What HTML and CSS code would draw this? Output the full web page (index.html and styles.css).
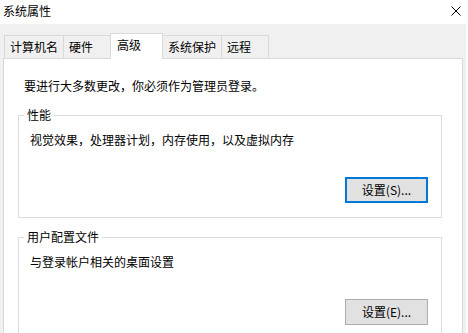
FILE: index.html
```html
<!DOCTYPE html>
<html>
<head>
	<meta charset="utf-8">
	<title>系统属性</title>
	<link rel="stylesheet" href="styles.css">
</head>
<body>
	<div class="titlebar">
		<span class="title">系统属性</span>
		<svg class="close" width="10" height="10" viewBox="0 0 10 10">
			<path d="M0.5 0.5L9.5 9.5M9.5 0.5L0.5 9.5" stroke="#000" stroke-width="1" fill="none"/>
		</svg>
	</div>
	<div class="dialog">
		<ul class="tabs">
			<li>计算机名</li>
			<li>硬件</li>
			<li class="current">高级</li>
			<li>系统保护</li>
			<li>远程</li>
		</ul>
		<div class="panel">
			<p class="intro">要进行大多数更改，你必须作为管理员登录。</p>
			<fieldset class="group">
				<legend>性能</legend>
				<p>视觉效果，处理器计划，内存使用，以及虚拟内存</p>
				<div class="actions">
					<button class="btn focus">设置(S)...</button>
				</div>
			</fieldset>
			<fieldset class="group">
				<legend>用户配置文件</legend>
				<p>与登录帐户相关的桌面设置</p>
				<div class="actions">
					<button class="btn">设置(E)...</button>
				</div>
			</fieldset>
		</div>
	</div>
</body>
</html>
```

FILE: styles.css
```css
*{
    margin: 0;
    padding: 0;
    box-sizing: border-box;
}
html,body{
    width: 468px;
    height: 333px;
    overflow: hidden;
}
body{
    background: #fff;
    color: #000;
    font: 12px/16px "Noto Sans CJK SC", "Microsoft YaHei", sans-serif;
}
.titlebar{
    height: 24px;
    display: flex;
    align-items: center;
    justify-content: space-between;
    padding: 0 7px 3px 3px;
    background: #fff;
}
.titlebar .close{
    display: block;
}
.dialog{
    display: flex;
    flex-direction: column;
    height: 309px;
    margin-right: 2px;
    padding: 9px 0 0 3px;
    background: #f0f0f0;
}
ul.tabs{
    display: flex;
    align-items: flex-end;
    flex: none;
    height: 25px;
    padding-left: 1px;
    list-style: none;
}
ul.tabs li{
    min-width: 48px;
    height: 23px;
    line-height: 22px;
    padding: 0 5px;
    border: 1px solid #d9d9d9;
    border-bottom: none;
    background: #f0f0f0;
    white-space: nowrap;
}
ul.tabs li + li{
    margin-left: -1px;
}
ul.tabs li.current{
    position: relative;
    z-index: 1;
    min-width: 53px;
    height: 26px;
    margin-bottom: -1px;
    padding: 0 6px;
    background: #fff;
}
.panel{
    flex: 1;
    min-height: 0;
    overflow: hidden;
    margin-right: 3px;
    padding: 19px 20px 0 14px;
    border: 1px solid #d9d9d9;
    border-bottom: none;
    background: #fff;
}
.intro{
    margin-left: 6px;
}
.group{
    margin-top: 13px;
    padding: 9px 13px 14px 11px;
    border: 1px solid #dcdcdc;
}
.group + .group{
    margin-top: 11px;
}
.group legend{
    margin-left: -6px;
    padding: 0 3px;
    line-height: 16px;
}
.actions{
    display: flex;
    justify-content: flex-end;
    margin-top: 29px;
}
.btn{
    width: 83px;
    height: 26px;
    border: 1px solid #adadad;
    background: #e1e1e1;
    color: #000;
    font: inherit;
    line-height: 22px;
}
.btn.focus{
    border: 2px solid #0078d7;
}
```
